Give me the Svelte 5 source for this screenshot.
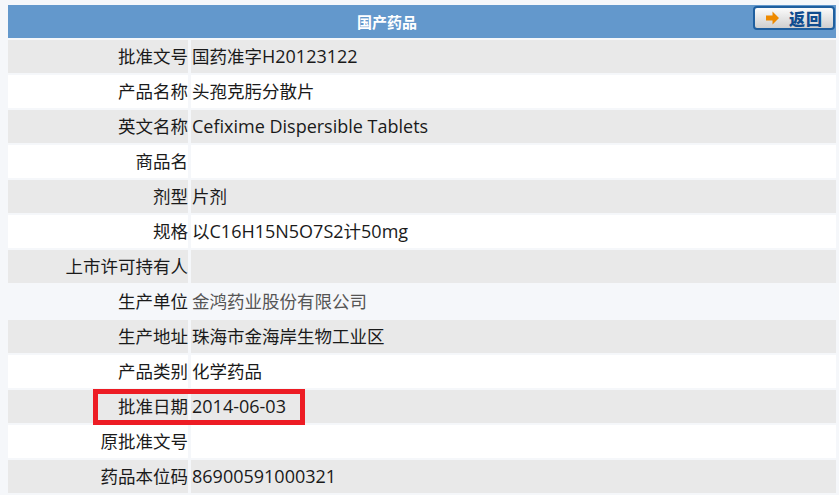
<script>
	const rows = [
		{ label: '批准文号', value: '国药准字H20123122' },
		{ label: '产品名称', value: '头孢克肟分散片' },
		{ label: '英文名称', value: 'Cefixime Dispersible Tablets' },
		{ label: '商品名', value: '' },
		{ label: '剂型', value: '片剂' },
		{ label: '规格', value: '以C16H15N5O7S2计50mg' },
		{ label: '上市许可持有人', value: '' },
		{ label: '生产单位', value: '金鸿药业股份有限公司', hover: true },
		{ label: '生产地址', value: '珠海市金海岸生物工业区' },
		{ label: '产品类别', value: '化学药品' },
		{ label: '批准日期', value: '2014-06-03', marked: true },
		{ label: '原批准文号', value: '' },
		{ label: '药品本位码', value: '86900591000321' }
	];

	// latin runs sit a little larger than the CJK around them
	function runs(text) {
		return text.split(/([\x00-\x7f]+)/).filter(Boolean);
	}
</script>

<div class="page">
	<div class="head">
		<span class="title">国产药品</span>
		<button class="back">
			<svg width="15" height="14" viewBox="0 0 15 14"><path d="M1 4.500h6.500V0.500L14 7l-6.500 6.500V9.500H1z" fill="#ee8a00" /></svg>
			<span>返回</span>
		</button>
	</div>
	<div class="grid">
		{#each rows as row, i}
			<div class="cell label" class:alt={i % 2 === 0} class:hover={row.hover}>
				{row.label}
				{#if row.marked}<div class="mark"></div>{/if}
			</div>
			<div class="cell value" class:alt={i % 2 === 0} class:hover={row.hover}>
				{#each runs(row.value) as run}
					{#if /^[\x00-\x7f]/.test(run)}<span class="latin">{run}</span>{:else}{run}{/if}
				{/each}
			</div>
		{/each}
	</div>
</div>

<style>
	:global(body) {
		background: #f5f7fa;
	}

	.page {
		height: 495px;
		box-sizing: border-box;
		padding: 5px 3px 0 8px;
		overflow: hidden;
		font-family: "Open Sans", "Noto Sans CJK SC", sans-serif;
	}

	.head {
		position: relative;
		height: 33px;
		box-sizing: border-box;
		padding: 1px 70px 0 0;
		background: #6398cc;
		display: flex;
		justify-content: center;
		align-items: center;
		margin-bottom: 2px;
	}

	.title {
		color: #fff;
		font-size: 15px;
		font-weight: 700;
		line-height: 17px;
	}

	.back {
		position: absolute;
		top: 1px;
		right: 1px;
		width: 82px;
		height: 24px;
		box-sizing: border-box;
		padding: 0 0 0 10px;
		display: flex;
		align-items: center;
		gap: 9px;
		border: 2px solid #1f5f9f;
		border-radius: 4px;
		background: linear-gradient(#fbfbfb, #cfcfcf);
		color: #0f4c8f;
		font-family: "Noto Sans CJK SC", sans-serif;
		font-size: 16px;
		font-weight: 900;
		line-height: 1;
		letter-spacing: 1px;
	}

	.grid {
		display: grid;
		grid-template-columns: 180px 1fr;
		grid-auto-rows: 33px;
		column-gap: 3px;
		row-gap: 2px;
	}

	.cell {
		background: #fff;
		color: #1a1a1a;
		font-size: 17.5px;
		line-height: 33px;
		white-space: nowrap;
	}

	.cell.alt {
		background: #e9e9e9;
	}

	.cell.hover {
		background: #f5f7fa;
	}

	.label {
		position: relative;
		text-align: right;
	}

	.value {
		padding-left: 1px;
		display: flex;
	}

	.latin {
		font-size: 18px;
	}

	.value.hover {
		color: #555;
	}

	.mark {
		position: absolute;
		left: 85px;
		top: -1px;
		width: 212px;
		height: 36px;
		box-sizing: border-box;
		border: 5px solid #ed1c24;
		z-index: 1;
	}
</style>
